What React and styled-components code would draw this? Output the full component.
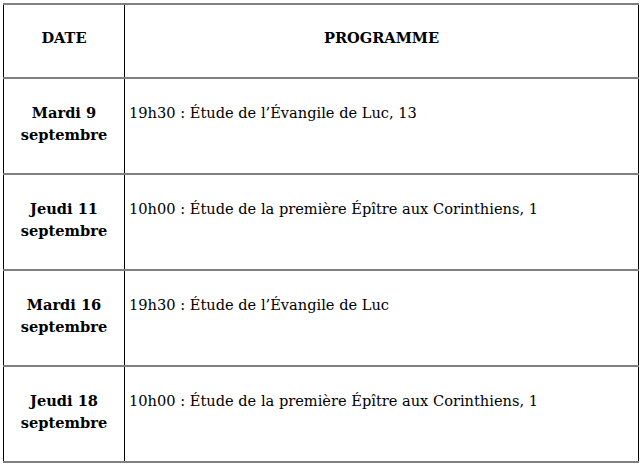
import React from "react";
import styled, { createGlobalStyle } from "styled-components";

const GlobalStyle = createGlobalStyle`
  html, body {
    margin: 0;
    padding: 0;
    background: #ffffff;
  }
  body {
    padding: 3px;
    font-family: "DejaVu Serif", "Liberation Serif", serif;
    color: #000;
  }
`;

const Table = styled.table`
  width: 636px;
  border-collapse: collapse;
  font-size: 14.6px;
  line-height: 22px;
`;

const Cell = styled.td`
  border-left: 1px solid #000;
  border-right: 1px solid #000;
  border-top: 2px solid #808080;
  border-bottom: 2px solid #808080;
  padding: 0 ${(p) => (p.$center ? "5px" : "4px")};
  vertical-align: baseline;
  text-align: ${(p) => (p.$center ? "center" : "left")};
  font-weight: ${(p) => (p.$bold ? "bold" : "normal")};
`;

const HeadCell = styled.th`
  border-left: 1px solid #000;
  border-right: 1px solid #000;
  border-top: 2px solid #808080;
  border-bottom: 2px solid #808080;
  height: 66px;
  padding: 0 5px 6px;
  font-weight: bold;
  text-align: center;
  vertical-align: middle;
  width: ${(p) => p.$width || "auto"};
`;

const Row = styled.tr`
  height: 96px;
`;

const CellText = styled.div`
  padding-top: 23px;
  padding-bottom: 26px;
`;

const rows = [
  { day: "Mardi 9", month: "septembre", text: "19h30 : Étude de l’Évangile de Luc, 13" },
  { day: "Jeudi 11", month: "septembre", text: "10h00 : Étude de la première Épître aux Corinthiens, 1" },
  { day: "Mardi 16", month: "septembre", text: "19h30 : Étude de l’Évangile de Luc" },
  { day: "Jeudi 18", month: "septembre", text: "10h00 : Étude de la première Épître aux Corinthiens, 1" },
];

export default function App() {
  return (
    <>
      <GlobalStyle />
      <Table>
        <thead>
          <tr>
            <HeadCell $width="110px">DATE</HeadCell>
            <HeadCell>PROGRAMME</HeadCell>
          </tr>
        </thead>
        <tbody>
          {rows.map((r, i) => (
            <Row key={i}>
              <Cell $center $bold>
                <CellText>
                  {r.day}
                  <br />
                  {r.month}
                </CellText>
              </Cell>
              <Cell>
                <CellText>{r.text}</CellText>
              </Cell>
            </Row>
          ))}
        </tbody>
      </Table>
    </>
  );
}
